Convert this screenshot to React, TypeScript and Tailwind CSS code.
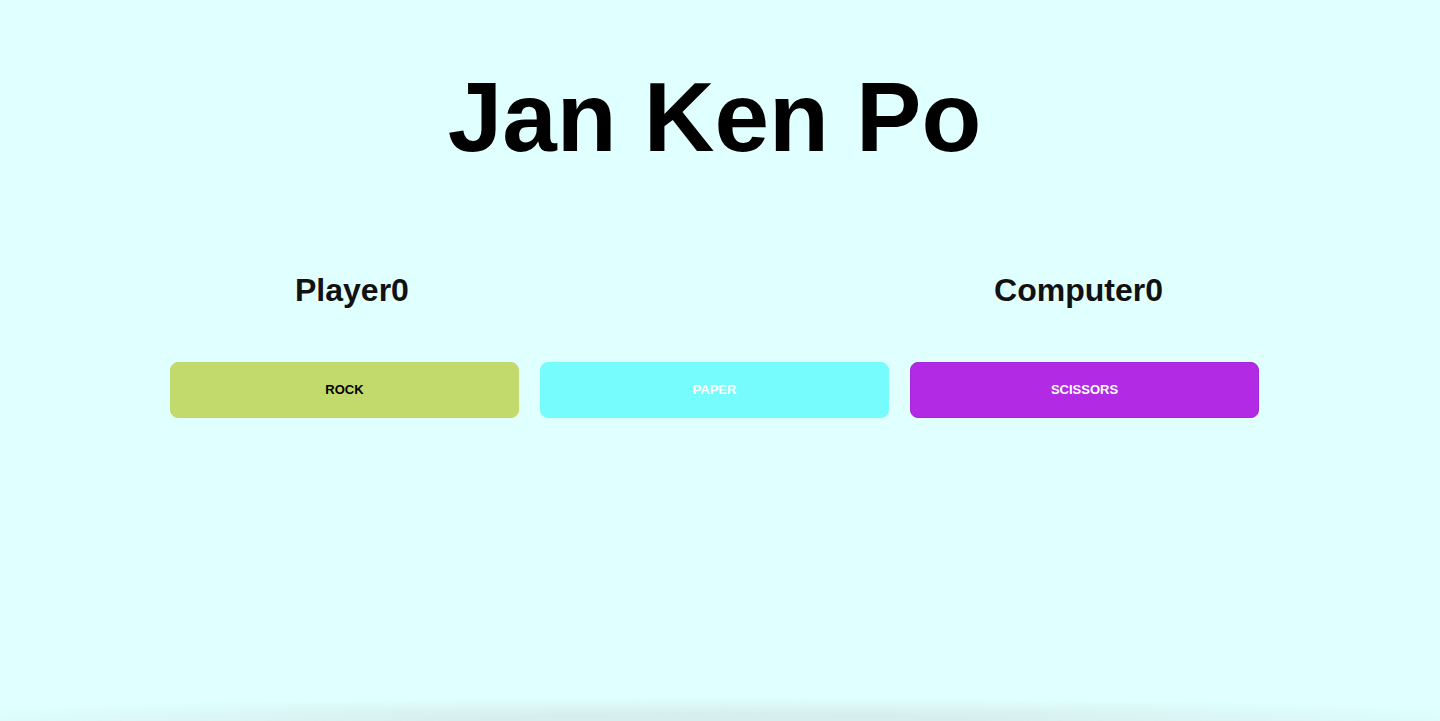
import React, { useState } from 'react';

type Choice = 'rock' | 'paper' | 'scissors';

const choices: { id: Choice; label: string; className: string }[] = [
    { id: 'rock', label: 'ROCK', className: 'bg-[#c2da6b] border-[#c2da6b] text-black' },
    { id: 'paper', label: 'PAPER', className: 'bg-[#77fcfd] border-[#77fcfd] text-white' },
    { id: 'scissors', label: 'SCISSORS', className: 'bg-[#b22ae3] border-[#a425de] text-white' },
];

const beats: Record<Choice, Choice> = { rock: 'scissors', paper: 'rock', scissors: 'paper' };

const App: React.FC = () => {
    const [player, setPlayer] = useState<number>(0);
    const [computer, setComputer] = useState<number>(0);

    const play = (choice: Choice) => {
        const ids: Choice[] = ['rock', 'paper', 'scissors'];
        const pick = ids[Math.floor(Math.random() * 3)];
        if (pick === choice) return;
        if (beats[choice] === pick) setPlayer(player + 1);
        else setComputer(computer + 1);
    };

    return (
        <div className="min-h-screen bg-[#e0ffff] font-['Liberation_Sans',Arial,sans-serif] text-black">
            <div className="w-[1429px] pt-[68px]">
                <h1 className="text-center text-[98px] font-bold leading-none">Jan Ken Po</h1>

                <div className="flex justify-between pl-[295px] pr-[266px] pt-[108px]">
                    <h2 className="text-[32px] font-bold leading-none text-[#111]">Player{player}</h2>
                    <h2 className="text-[32px] font-bold leading-none text-[#111]">Computer{computer}</h2>
                </div>

                <div className="flex justify-center gap-[21px] pt-[56px]">
                    {choices.map((c) => (
                        <button
                            key={c.id}
                            type="button"
                            onClick={() => play(c.id)}
                            className={`h-[56px] w-[349px] rounded-lg border text-[13px] font-bold ${c.className}`}
                        >
                            {c.label}
                        </button>
                    ))}
                </div>
            </div>
            <div className="pointer-events-none fixed inset-x-0 bottom-0 h-[24px] bg-[radial-gradient(ellipse_58%_100%_at_50%_100%,#d6eeee_30%,#e0ffff00)]" />
        </div>
    );
};

export default App;
